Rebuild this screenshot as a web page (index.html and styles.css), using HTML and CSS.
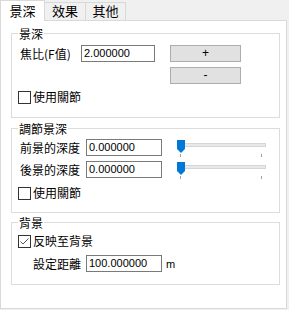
FILE: index.html
```html
<!DOCTYPE html>
<html>
<head>
<meta charset="utf-8">
<link rel="stylesheet" href="styles.css">
</head>
<body>
<div class="tabs">
  <div class="tab sel">景深</div>
  <div class="tab t2">效果</div>
  <div class="tab t3">其他</div>
</div>
<div class="panel">
  <fieldset class="grp g1">
    <legend>景深</legend>
    <div class="row r1">
      <span class="lbl lw1">焦比(F值)</span>
      <div class="inp iw1">2.000000</div>
      <div class="btn">+</div>
    </div>
    <div class="row r2"><div class="btn">-</div></div>
    <div class="chk c1"><span class="box"></span><span>使用關節</span></div>
  </fieldset>

  <fieldset class="grp g2">
    <legend>調節景深</legend>
    <div class="row r1b">
      <span class="lbl lw2">前景的深度</span>
      <div class="inp iw2">0.000000</div>
      <svg class="slider" width="92" height="20" viewBox="0 0 92 20">
        <rect x="0.5" y="4.5" width="88" height="3" fill="#e7eaea" stroke="#d6d6d6"/>
        <polygon points="0,1 8,1 8,10 4,14 0,10" fill="#0078d7"/>
        <line x1="3.5" y1="15" x2="3.5" y2="18" stroke="#a0a0a0"/>
        <line x1="84.5" y1="15" x2="84.5" y2="18" stroke="#a0a0a0"/>
      </svg>
    </div>
    <div class="row r2">
      <span class="lbl lw2">後景的深度</span>
      <div class="inp iw2">0.000000</div>
      <svg class="slider" width="92" height="20" viewBox="0 0 92 20">
        <rect x="0.5" y="4.5" width="88" height="3" fill="#e7eaea" stroke="#d6d6d6"/>
        <polygon points="0,1 8,1 8,10 4,14 0,10" fill="#0078d7"/>
        <line x1="3.5" y1="15" x2="3.5" y2="18" stroke="#a0a0a0"/>
        <line x1="84.5" y1="15" x2="84.5" y2="18" stroke="#a0a0a0"/>
      </svg>
    </div>
    <div class="chk c2"><span class="box"></span><span>使用關節</span></div>
  </fieldset>

  <fieldset class="grp g3">
    <legend>背景</legend>
    <div class="chk c3"><span class="box"><svg width="11" height="11" viewBox="0 0 11 11"><polyline points="1.5,5.5 4,8 9.5,2.5" fill="none" stroke="#555" stroke-width="1"/></svg></span><span>反映至背景</span></div>
    <div class="row r3">
      <span class="lbl lw3">設定距離</span>
      <div class="inp iw2">100.000000</div>
      <span class="unit">m</span>
    </div>
  </fieldset>
</div>
</body>
</html>
```

FILE: styles.css
```css
html, body {
  margin: 0;
  padding: 0;
}
body {
  background: #f0f0f0;
  width: 289px;
  height: 310px;
  overflow: hidden;
  font-family: "Noto Sans CJK TC", "Noto Sans CJK SC", sans-serif;
  font-size: 12px;
  color: #000;
}
.tabs {
  display: flex;
  align-items: flex-end;
  height: 20px;
}
.tab {
  box-sizing: border-box;
  border: 1px solid #d9d9d9;
  border-bottom: none;
  height: 18px;
  line-height: 16px;
  font-size: 13px;
  text-align: center;
  background: #f0f0f0;
}
.tab.sel {
  position: relative;
  z-index: 1;
  width: 45px;
  height: 21px;
  margin-bottom: -1px;
  background: #fff;
  line-height: 19px;
  padding-bottom: 2px;
}
.tab.t2 {
  width: 42px;
  margin-left: -1px;
}
.tab.t3 {
  width: 41px;
  margin-left: -1px;
}
.panel {
  box-sizing: border-box;
  width: 287px;
  height: 289px;
  background: #fff;
  border: 1px solid #d9d9d9;
  padding: 5px 0 0 10px;
}
.grp {
  box-sizing: border-box;
  width: 269px;
  margin: 0;
  border: 1px solid #dcdcdc;
  padding: 0 0 12px 6px;
  min-inline-size: 0;
}
.grp legend {
  padding: 0 1px;
  font-size: 12px;
  line-height: 15px;
}
.g1 { padding-bottom: 13px; }
.g2 { margin-top: 3px; }
.g3 { margin-top: 2px; }
.row {
  display: flex;
  align-items: center;
  height: 17px;
}
.r1 { margin-top: 4px; }
.r1b { margin-top: 3px; }
.r2 { margin-top: 5px; }
.r2 .btn { margin-left: 152px; }
.r3 { margin-top: 7px; }
.lbl {
  box-sizing: border-box;
  padding-left: 2px;
  white-space: nowrap;
  line-height: 17px;
}
.lw1 { width: 63px; }
.lw2 { width: 68px; }
.lw3 { width: 68px; padding-left: 15px; }
.inp {
  box-sizing: border-box;
  height: 17px;
  border: 1px solid #7a7a7a;
  background: #fff;
  font-family: "Liberation Sans", Arial, sans-serif;
  font-size: 11px;
  line-height: 15px;
  padding-left: 2px;
  overflow: hidden;
  white-space: nowrap;
}
.iw1 { width: 74px; }
.iw2 { width: 76px; }
.btn {
  box-sizing: border-box;
  width: 71px;
  height: 17px;
  margin-left: 15px;
  background: #e1e1e1;
  border: 1px solid #adadad;
  font-family: "Liberation Sans", Arial, sans-serif;
  font-size: 12px;
  line-height: 15px;
  text-align: center;
}
.slider {
  display: block;
  margin-left: 15px;
  margin-top: 3px;
}
.unit {
  margin-left: 4px;
  font-family: "Liberation Sans", Arial, sans-serif;
  font-size: 11px;
}
.chk {
  display: flex;
  align-items: center;
  height: 14px;
  line-height: 14px;
}
.c1 { margin-top: 6px; }
.c2 { margin-top: 8px; }
.c3 { margin-top: 4px; }
.box {
  box-sizing: border-box;
  width: 13px;
  height: 13px;
  border: 1px solid #333;
  background: #fff;
  margin-right: 2px;
  display: flex;
  align-items: center;
  justify-content: center;
}
.box svg { display: block; }
```
